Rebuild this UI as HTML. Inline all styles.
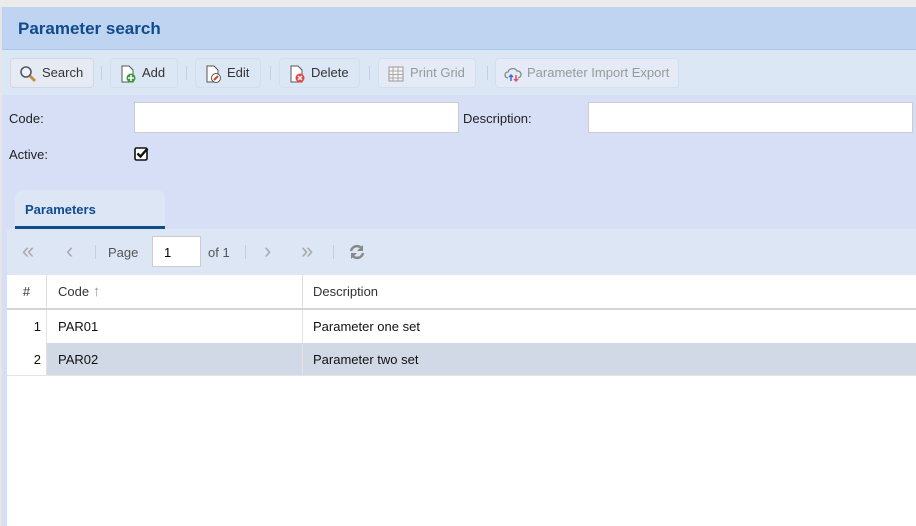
<!DOCTYPE html>
<html><head><style>
body{margin:0;width:916px;height:526px;overflow:hidden;background:#ebebeb;font-family:"Liberation Sans",sans-serif;position:relative}
*{box-sizing:border-box}
.a{position:absolute}
.hdr{left:2px;top:7px;width:914px;height:43px;background:#bfd4f0;border-bottom:1px solid #a9c6ee}
.hdr span{position:absolute;left:16px;top:12px;font-size:17px;font-weight:bold;color:#0f4b8e}
.tb{left:2px;top:50px;width:914px;height:45px;background:#dce7f5}
.btn{position:absolute;top:8px;height:30px;border:1px solid #d3dfee;border-radius:4px;font-size:13px;color:#333;line-height:28px;padding-left:31px}
.btn svg{position:absolute;left:8px;top:6px}
.dis{color:#999;background:#e4ebf6}
.sep{position:absolute;top:16px;width:1px;height:14px;background:#c3cfe0}
.form{left:2px;top:95px;width:914px;height:431px;background:#d7dff6}
.lbl{font-size:13px;color:#222}
.inp{background:#fff;border:1px solid #ccc;height:31px}
.grid{left:7px;top:229px;width:909px;height:297px;background:#fff}
.gtb{left:7px;top:229px;width:909px;height:46px;background:#dce6f4}
.gt{font-size:13px;color:#555}
.ar{font-size:22px;color:#aaa;top:9px}
.row{position:absolute;left:7px;width:909px;height:33px;font-size:13px;color:#111}
.row div{position:absolute;top:0;height:100%;line-height:33px}
</style></head><body>
<div class="a" style="left:0;top:7px;width:2px;height:519px;background:#e5e5ea"></div>
<div class="a hdr"><span>Parameter search</span></div>
<div class="a tb">
 <div class="btn" style="left:8px;width:84px;background:#e6ebf3;border-color:#cfd8e4"><svg width="18" height="18"><circle cx="7" cy="7" r="5" fill="#eef4fb" stroke="#556" stroke-width="1.6"/><path d="M11 11l5 5" stroke="#c8903a" stroke-width="3"/></svg>Search</div>
 <div class="sep" style="left:99px"></div>
 <div class="btn" style="left:108px;width:68px"><svg width="18" height="18"><path d="M3 1h7l4 4v12H3z" fill="#fff" stroke="#555"/><circle cx="12" cy="13" r="4.5" fill="#3a9a3a"/><path d="M12 10v6M9 13h6" stroke="#fff" stroke-width="1.5"/></svg>Add</div>
 <div class="sep" style="left:184px"></div>
 <div class="btn" style="left:193px;width:66px"><svg width="18" height="18"><path d="M3 1h7l4 4v12H3z" fill="#fff" stroke="#555"/><circle cx="12" cy="13" r="4.5" fill="#fff" stroke="#555"/><path d="M10 15l4-4" stroke="#d2451e" stroke-width="2"/></svg>Edit</div>
 <div class="sep" style="left:268px"></div>
 <div class="btn" style="left:277px;width:81px"><svg width="18" height="18"><path d="M3 1h7l4 4v12H3z" fill="#fff" stroke="#555"/><circle cx="12" cy="13" r="4.5" fill="#e04848"/><path d="M10 11l4 4M14 11l-4 4" stroke="#fff" stroke-width="1.3"/></svg>Delete</div>
 <div class="sep" style="left:367px"></div>
 <div class="btn dis" style="left:376px;width:98px"><svg width="18" height="18"><rect x="2" y="2" width="14" height="14" fill="#f4f4f4" stroke="#999"/><path d="M2 6h14M2 9.5h14M2 13h14M6 2v14M11 2v14" stroke="#aaa"/></svg>Print Grid</div>
 <div class="sep" style="left:485px"></div>
 <div class="btn dis" style="left:493px;width:184px"><svg width="18" height="18"><path d="M4 13a3 3 0 010-6 5 5 0 019-1 3.5 3.5 0 011 7" fill="none" stroke="#888" stroke-width="1.3"/><path d="M7 16V10M5 12l2-2 2 2" stroke="#3a6fd8" stroke-width="1.5" fill="none"/><path d="M12 10v6M10 14l2 2 2-2" stroke="#e05060" stroke-width="1.5" fill="none"/></svg>Parameter Import Export</div>
</div>
<div class="a form"></div>
<div class="a lbl" style="left:9px;top:111px">Code:</div>
<div class="a inp" style="left:134px;top:102px;width:325px"></div>
<div class="a lbl" style="left:463px;top:111px">Description:</div>
<div class="a inp" style="left:588px;top:102px;width:325px"></div>
<div class="a lbl" style="left:9px;top:147px">Active:</div>
<svg class="a" style="left:134px;top:146px" width="18" height="16"><rect x="1" y="2" width="12" height="12" rx="1.5" fill="#fff" stroke="#111" stroke-width="1.6"/><path d="M3.5 7.5l3 3 7-8" fill="none" stroke="#111" stroke-width="2.4"/></svg>
<div class="a" style="left:15px;top:190px;width:150px;height:39px;background:#dce6f4;border-radius:8px 8px 0 0;border-bottom:3px solid #0f4b8e"><span style="position:absolute;left:10px;top:12px;font-size:13px;font-weight:bold;color:#0f4b8e">Parameters</span></div>
<div class="a grid"></div>
<div class="a gtb">
 <span class="a ar" style="left:15px">«</span>
 <span class="a ar" style="left:59px">‹</span>
 <div class="sep" style="left:88px"></div>
 <span class="a gt" style="left:101px;top:16px">Page</span>
 <div class="a" style="left:145px;top:7px;width:49px;height:31px;background:#fff;border:1px solid #ccc;font-size:13px;padding:8px 0 0 11px">1</div>
 <span class="a gt" style="left:201px;top:16px">of 1</span>
 <div class="sep" style="left:238px"></div>
 <span class="a ar" style="left:257px">›</span>
 <span class="a ar" style="left:294px">»</span>
 <div class="sep" style="left:326px"></div>
 <svg class="a" style="left:341px;top:14px" width="18" height="18"><path d="M3 8a6 6 0 0111-2" fill="none" stroke="#888" stroke-width="2.5"/><path d="M15 2v6h-6z" fill="#888"/><path d="M15 10a6 6 0 01-11 2" fill="none" stroke="#888" stroke-width="2.5"/><path d="M3 16v-6h6z" fill="#888"/></svg>
</div>
<div class="row" style="top:275px;height:35px;border-bottom:2px solid #d5d5d5;color:#333">
 <div style="left:0;width:40px;border-right:1px solid #ddd;text-align:center">#</div>
 <div style="left:40px;width:256px;border-right:1px solid #ddd;padding-left:11px">Code <span style="color:#999;font-weight:bold;font-size:15px">↑</span></div>
 <div style="left:296px;padding-left:10px">Description</div>
</div>
<div class="row" style="top:310px">
 <div style="left:0;width:40px;text-align:right;border-right:1px solid #e3e3e3;padding-right:5px">1</div>
 <div style="left:40px;width:256px;border-right:1px solid #e3e3e3;padding-left:11px">PAR01</div>
 <div style="left:296px;padding-left:10px">Parameter one set</div>
</div>
<div class="row" style="top:343px;border-bottom:1px solid #e3e3e3">
 <div style="left:0;width:40px;text-align:right;border-right:1px solid #e3e3e3;padding-right:5px;background:#fff">2</div>
 <div style="left:40px;width:256px;border-right:1px solid #e3e3e3;padding-left:11px;background:#d2d9e6">PAR02</div>
 <div style="left:296px;width:613px;padding-left:10px;background:#d2d9e6">Parameter two set</div>
</div>
</body></html>
